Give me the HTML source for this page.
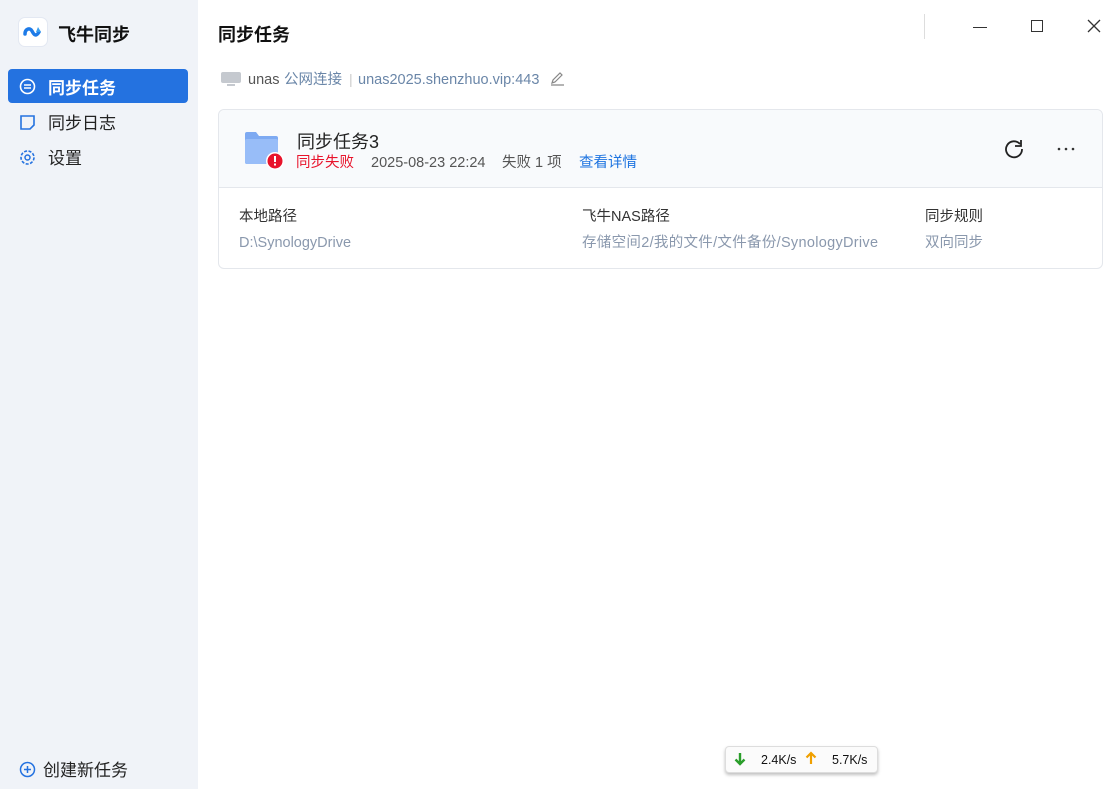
<!DOCTYPE html><html><head><meta charset="utf-8"><style>
*{margin:0;padding:0;box-sizing:border-box}
body{width:1105px;height:789px;position:relative;background:#fff;font-family:"Liberation Sans","Noto Sans CJK SC",sans-serif;overflow:hidden;color:#222}
.side{position:absolute;left:0;top:0;width:198px;height:789px;background:#f0f3f8}
.a{position:absolute;white-space:nowrap}
.t{line-height:21px;margin-top:2px}
</style></head><body>
<div class="side">
 <div class="a" style="left:18px;top:17px;width:30px;height:30px;border-radius:7px;background:#fff;border:1px solid #e3e8f2"></div>
 <svg class="a" style="left:21px;top:21px" width="24" height="22" viewBox="0 0 24 22"><path d="M4 13c0-5 5-7 7-3s4 6 7 1" fill="none" stroke="#1e7be8" stroke-width="3.5" stroke-linecap="round"/><path d="M17 6l3 5-5 0z" fill="#3aa0f0"/></svg>
 <div class="a" style="left:58px;top:21px;font-size:18px;font-weight:bold;color:#111">飞牛同步</div>
 <div class="a" style="left:8px;top:69px;width:180px;height:34px;border-radius:4px;background:#2472e0"></div>
 <svg class="a" style="left:19px;top:78px" width="17" height="17" viewBox="0 0 17 17"><circle cx="8.5" cy="8.5" r="7" fill="none" stroke="#fff" stroke-width="1.6"/><path d="M5 7h7M5 10h7" stroke="#fff" stroke-width="1.5"/></svg>
 <div class="a" style="left:48px;top:74px;font-size:17px;font-weight:bold;color:#fff">同步任务</div>
 <svg class="a" style="left:19px;top:114px" width="17" height="17" viewBox="0 0 17 17"><path d="M2 2h13v9l-4 4H2z" fill="none" stroke="#2472e0" stroke-width="1.6"/></svg>
 <div class="a" style="left:48px;top:109px;font-size:17px;color:#222">同步日志</div>
 <svg class="a" style="left:19px;top:149px" width="17" height="17" viewBox="0 0 17 17"><circle cx="8.5" cy="8.5" r="6.5" fill="none" stroke="#2472e0" stroke-width="1.6" stroke-dasharray="3 1.5"/><circle cx="8.5" cy="8.5" r="2.5" fill="none" stroke="#2472e0" stroke-width="1.5"/></svg>
 <div class="a" style="left:48px;top:144px;font-size:17px;color:#222">设置</div>
 <svg class="a" style="left:19px;top:761px" width="17" height="17" viewBox="0 0 17 17"><circle cx="8.5" cy="8.5" r="7" fill="none" stroke="#2472e0" stroke-width="1.5"/><path d="M5 8.5h7M8.5 5v7" stroke="#2472e0" stroke-width="1.5"/></svg>
 <div class="a" style="left:43px;top:756px;font-size:17px;color:#222">创建新任务</div>
</div>
<div class="a" style="left:218px;top:21px;font-size:18px;font-weight:bold;color:#111">同步任务</div>
<div class="a" style="left:924px;top:14px;width:1px;height:25px;background:#ddd"></div>
<div class="a" style="left:973px;top:27px;width:14px;height:1px;background:#333"></div>
<div class="a" style="left:1031px;top:20px;width:12px;height:12px;border:1.3px solid #333"></div>
<svg class="a" style="left:1087px;top:19px" width="14" height="14"><path d="M1 1l12 12M13 1L1 13" stroke="#333" stroke-width="1.3"/></svg>
<svg class="a" style="left:221px;top:72px" width="20" height="16"><rect x="0" y="0" width="20" height="11" rx="2" fill="#c5c9cf"/><rect x="6" y="12" width="8" height="2" fill="#c5c9cf"/></svg>
<div class="a t" style="left:248px;top:68px;font-size:14.5px;color:#555">unas</div>
<div class="a t" style="left:284px;top:68px;font-size:14.5px;color:#6a86a8">公网连接</div>
<div class="a t" style="left:349px;top:67px;font-size:14px;color:#ccc">|</div>
<div class="a t" style="left:358px;top:68px;font-size:14.5px;color:#6a86a8">unas2025.shenzhuo.vip:443</div>
<svg class="a" style="left:550px;top:71px" width="15" height="15"><path d="M2 12l1-3 7-7 2 2-7 7zM1 14h13" fill="none" stroke="#888" stroke-width="1.2"/></svg>
<div class="a" style="left:218px;top:109px;width:885px;height:160px;border:1px solid #e4e7ec;border-radius:6px"></div>
<div class="a" style="left:219px;top:110px;width:883px;height:78px;background:#f8fafc;border-bottom:1px solid #e4e7ec;border-radius:6px 6px 0 0"></div>
<svg class="a" style="left:243px;top:130px" width="44" height="42"><path d="M2 4a2 2 0 012-2h9l3 4h17a2 2 0 012 2v24a2 2 0 01-2 2H4a2 2 0 01-2-2z" fill="#7eaaf2"/><rect x="2" y="9" width="33" height="25" rx="2" fill="#98bdf8"/><circle cx="32" cy="31" r="9" fill="#fff"/><circle cx="32" cy="31" r="7.5" fill="#e8132b"/><rect x="31" y="26" width="2" height="6" fill="#fff"/><rect x="31" y="33.5" width="2" height="2" fill="#fff"/></svg>
<div class="a" style="left:297px;top:128px;font-size:18px;color:#222">同步任务3</div>
<div class="a t" style="left:296px;top:151px;font-size:14.5px;color:#e8132b">同步失败</div>
<div class="a t" style="left:371px;top:151px;font-size:14.5px;color:#555">2025-08-23 22:24</div>
<div class="a t" style="left:502px;top:151px;font-size:14.5px;color:#555">失败 1 项</div>
<div class="a t" style="left:579px;top:151px;font-size:14.5px;color:#1e74e0">查看详情</div>
<svg class="a" style="left:1003px;top:138px" width="22" height="22"><path d="M17 6A8 8 0 1 0 19 11" fill="none" stroke="#222" stroke-width="1.8"/><path d="M18 2v6h-6" fill="none" stroke="#222" stroke-width="1.8"/></svg>
<svg class="a" style="left:1056px;top:146px" width="20" height="6"><circle cx="3" cy="3" r="1.3" fill="#333"/><circle cx="10" cy="3" r="1.3" fill="#333"/><circle cx="17" cy="3" r="1.3" fill="#333"/></svg>
<div class="a t" style="left:239px;top:205px;font-size:14.5px;color:#333">本地路径</div>
<div class="a t" style="left:239px;top:231px;font-size:14.5px;color:#8a98ad">D:\SynologyDrive</div>
<div class="a t" style="left:582px;top:205px;font-size:14.5px;color:#333">飞牛NAS路径</div>
<div class="a t" style="left:582px;top:231px;font-size:14.5px;color:#8a98ad;letter-spacing:0.3px">存储空间2/我的文件/文件备份/SynologyDrive</div>
<div class="a t" style="left:925px;top:205px;font-size:14.5px;color:#333">同步规则</div>
<div class="a t" style="left:925px;top:231px;font-size:14.5px;color:#8a98ad">双向同步</div>
<div class="a" style="left:725px;top:746px;width:153px;height:27px;background:#fbfbfb;border:1px solid #ddd;border-radius:4px;box-shadow:0 2px 3px rgba(0,0,0,.25)"></div>
<svg class="a" style="left:734px;top:752px" width="12" height="14"><path d="M6 1v11M1.5 7.5L6 12l4.5-4.5" fill="none" stroke="#2a9e2a" stroke-width="2.4"/></svg>
<div class="a" style="left:761px;top:753px;font-size:12.5px;color:#111">2.4K/s</div>
<svg class="a" style="left:805px;top:751px" width="12" height="14"><path d="M6 13V2M1.5 6.5L6 2l4.5 4.5" fill="none" stroke="#f0a000" stroke-width="2.2"/></svg>
<div class="a" style="left:832px;top:753px;font-size:12.5px;color:#111">5.7K/s</div>
</body></html>
